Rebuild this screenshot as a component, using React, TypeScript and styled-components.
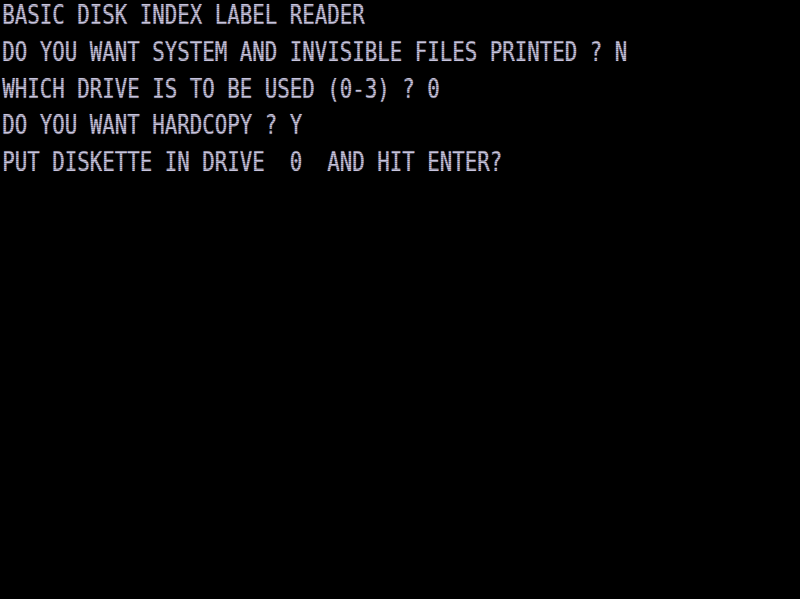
import React from "react";
import styled, { createGlobalStyle } from "styled-components";

const Global = createGlobalStyle`
  html, body {
    margin: 0;
    padding: 0;
    background: #000;
  }
  #root {
    width: 800px;
    height: 599px;
    overflow: hidden;
  }
`;

const Crt = styled.div`
  position: relative;
  width: 800px;
  height: 599px;
  background: #000;
  overflow: hidden;
`;

const Screen = styled.div`
  padding: 0 0 0 3px;
  margin-top: -3px;
  transform: scaleX(0.758);
  transform-origin: 0 0;
  width: 1055px;
`;

const Line = styled.div`
  font-family: "DejaVu Sans Mono", "Liberation Mono", monospace;
  font-size: 27.4px;
  line-height: 36.75px;
  height: 36.75px;
  white-space: pre;
  color: #c8c5df;
  text-shadow: 0 0 1px rgba(200, 197, 223, 0.6);
`;

const Scanlines = styled.div`
  position: absolute;
  inset: 0;
  pointer-events: none;
  background: repeating-linear-gradient(
    to bottom,
    rgba(0, 0, 0, 0) 0px,
    rgba(0, 0, 0, 0) 1px,
    rgba(0, 0, 0, 0.25) 1px,
    rgba(0, 0, 0, 0.25) 2px
  );
`;

const lines = [
  "BASIC DISK INDEX LABEL READER",
  "DO YOU WANT SYSTEM AND INVISIBLE FILES PRINTED ? N",
  "WHICH DRIVE IS TO BE USED (0-3) ? 0",
  "DO YOU WANT HARDCOPY ? Y",
  "PUT DISKETTE IN DRIVE  0  AND HIT ENTER?",
];

export default function App() {
  return (
    <>
      <Global />
      <Crt>
        <Screen>
          {lines.map((l, i) => (
            <Line key={i}>{l}</Line>
          ))}
        </Screen>
        <Scanlines />
      </Crt>
    </>
  );
}
